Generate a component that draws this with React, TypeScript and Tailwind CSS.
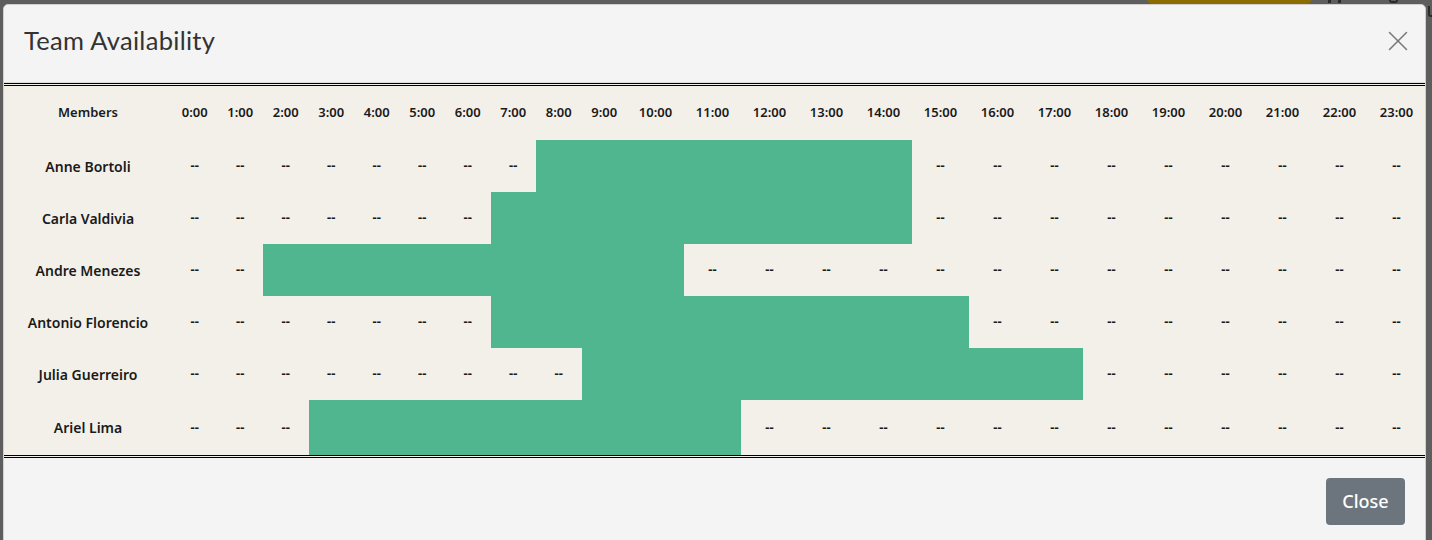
import React from 'react';
import { X } from 'lucide-react';

type Member = { name: string; from: number; to: number };

const members: Member[] = [
  { name: 'Anne Bortoli', from: 8, to: 14 },
  { name: 'Carla Valdivia', from: 7, to: 14 },
  { name: 'Andre Menezes', from: 2, to: 10 },
  { name: 'Antonio Florencio', from: 7, to: 15 },
  { name: 'Julia Guerreiro', from: 9, to: 17 },
  { name: 'Ariel Lima', from: 3, to: 11 },
];

const hours = Array.from({ length: 24 }, (_, i) => i);

const gridCols = 'grid grid-cols-[168px_repeat(10,45.5px)_repeat(14,57px)]';

const App: React.FC = () => {
  return (
    <div className="relative h-[540px] w-[1432px] overflow-hidden bg-[#5e5e5e] font-['Noto_Sans',sans-serif]">
      {/* dimmed page behind the modal */}
      <div className="absolute left-[1147px] top-[-30px] h-[34px] w-[165px] rounded-md bg-[#8a6c00]" />
      <div className="absolute left-[1328px] top-0 h-[3px] w-[3px] bg-[#2a2a2a]" />
      <div className="absolute left-[1338px] top-0 h-[3px] w-[3px] bg-[#2a2a2a]" />
      <div className="absolute left-[1389px] top-0 h-[3px] w-[9px] rounded-b-full border-x-2 border-b-2 border-[#2a2a2a]" />
      <div className="absolute left-[1428px] top-[6px] h-[11px] w-[4px] rounded-bl-[3px] border-b-2 border-l-2 border-[#2a2a2a]" />

      <div className="relative ml-[3px] mt-[4px] w-[1423px] rounded-t-[5px] border border-[#d0d0d0] bg-[#f4f4f4]">
        {/* Header */}
        <div className="flex h-[78px] items-center justify-between border-b border-[#dcdcdc] pl-[20px] pr-[10px]">
          <h1 className="pb-[6px] font-['Lato',sans-serif] text-[25.5px] font-normal tracking-[0.3px] text-[#333]">
            Team Availability
          </h1>
          <X size={34} strokeWidth={1.1} className="mb-[5px] text-[#7a7a7a]" />
        </div>

        {/* Availability table */}
        <div className="border-y-[3px] border-double border-black bg-[#f3f0ea] text-[13px] font-semibold text-[#1a1a1a]">
          <div className={`${gridCols} h-[54px] items-center text-center`}>
            <div>Members</div>
            {hours.map((h) => (
              <div key={h}>{h}:00</div>
            ))}
          </div>
          {members.map((m, idx) => (
            <div
              key={m.name}
              className={`${gridCols} text-center ${idx === members.length - 1 ? 'h-[55px]' : 'h-[52px]'}`}
            >
              <div className="flex items-center justify-center text-[14px]">{m.name}</div>
              {hours.map((h) =>
                h >= m.from && h <= m.to ? (
                  <div key={h} className="bg-[#50b68f]" />
                ) : (
                  <div key={h} className="flex items-center justify-center font-bold">--</div>
                )
              )}
            </div>
          ))}
        </div>

        {/* Footer */}
        <div className="flex h-[90px] justify-end pr-[20px] pt-[20px]">
          <button className="h-[47px] w-[79px] rounded-[4px] bg-[#6c757d] text-[18px] font-medium text-white">
            Close
          </button>
        </div>
      </div>
    </div>
  );
};

export default App;
